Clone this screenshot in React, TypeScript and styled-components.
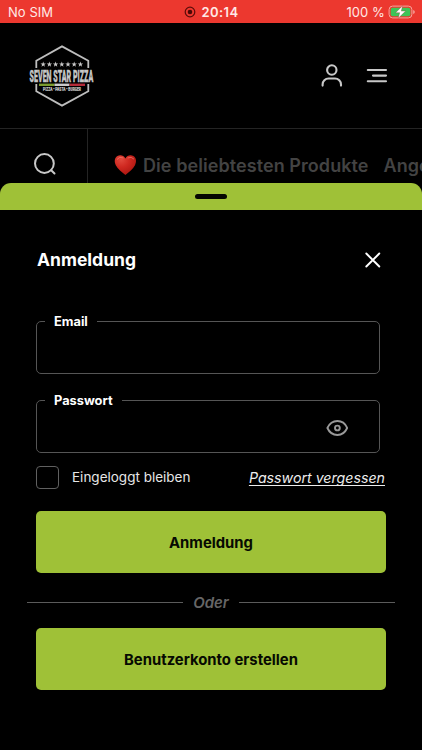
import React from "react";
import styled, { createGlobalStyle } from "styled-components";

const Global = createGlobalStyle`
  * { box-sizing: border-box; }
  body { margin: 0; background: #000; font-family: Inter, "Liberation Sans", sans-serif; }
  button, input { font-family: inherit; }
`;

const Screen = styled.div`
  width: 422px;
  height: 750px;
  overflow: hidden;
  display: flex;
  flex-direction: column;
  background: #000;
`;

const StatusBar = styled.div`
  height: 23px;
  flex: none;
  display: grid;
  grid-template-columns: 1fr auto 1fr;
  align-items: center;
  padding: 1px 7px 0 8px;
  background: #ec382f;
  color: #ffe9e6;
  font-size: 13px;
  line-height: 22px;
`;

const Carrier = styled.span`
  letter-spacing: 0.05px;
`;

const Clock = styled.div`
  display: flex;
  align-items: center;
  gap: 5px;
  font-weight: 600;
  letter-spacing: 0.45px;
`;

const Battery = styled.div`
  display: flex;
  align-items: center;
  justify-content: flex-end;
  gap: 3px;
  letter-spacing: 0.1px;
`;

const Header = styled.header`
  height: 106px;
  flex: none;
  display: flex;
  align-items: flex-start;
  justify-content: space-between;
  padding: 20px 34px 0 26px;
  border-bottom: 1px solid #242424;
`;

const HeaderActions = styled.div`
  display: flex;
  align-items: center;
  gap: 23px;
  margin-top: 20px;
`;

const IconButton = styled.button`
  display: flex;
  padding: 0;
  border: 0;
  background: none;
`;

const CategoryBar = styled.nav`
  height: 54px;
  flex: none;
  display: flex;
`;

const SearchCell = styled.div`
  width: 88px;
  flex: none;
  padding: 23px 0 0 33px;
  border-right: 1px solid #242424;
`;

const Categories = styled.div`
  display: flex;
  align-items: flex-start;
  padding: 25px 0 0 26px;
  color: #434343;
  font-size: 18px;
  font-weight: 600;
  line-height: 24px;
  letter-spacing: 0.07px;
  white-space: nowrap;
`;

const Category = styled.span<{ $start: number }>`
  margin-left: ${(p) => p.$start}px;
`;

const Sheet = styled.main`
  flex: 1;
  display: flex;
  flex-direction: column;
`;

const SheetGrip = styled.div`
  height: 27px;
  flex: none;
  display: flex;
  justify-content: center;
  padding-top: 11px;
  border-radius: 11px 11px 0 0;
  background: #9fc137;

  &::after {
    content: "";
    width: 32px;
    height: 5px;
    border-radius: 3px;
    background: #050702;
  }
`;

const SheetBody = styled.form`
  display: flex;
  flex-direction: column;
  padding: 38px 36px 0;
`;

const TitleRow = styled.div`
  display: flex;
  align-items: center;
  justify-content: space-between;
  height: 24px;
  padding: 0 5px 0 1px;
`;

const Title = styled.h1`
  margin: 0;
  color: #fff;
  font-size: 17.5px;
  font-weight: 650;
  line-height: 22px;
`;

const Fields = styled.div`
  display: flex;
  flex-direction: column;
  gap: 17px;
  margin: 40px 6px 0 0;
`;

const Field = styled.fieldset`
  height: 62px;
  min-width: 0;
  margin: 0;
  padding: 0 31px 0 8px;
  display: flex;
  align-items: center;
  border: 1px solid #555;
  border-radius: 5px;
`;

const Legend = styled.legend`
  padding: 1px 9px 0;
  color: #fff;
  font-size: 12.8px;
  font-weight: 650;
  line-height: 17px;
`;

const Input = styled.input`
  flex: 1;
  min-width: 0;
  height: 36px;
  border: 0;
  outline: 0;
  background: transparent;
  color: #fff;
`;

const RevealButton = styled(IconButton)`
  margin-top: 2px;
`;

const Options = styled.div`
  display: flex;
  align-items: center;
  justify-content: space-between;
  height: 24px;
  margin: 12px 0 22px;
`;

const Remember = styled.label`
  display: flex;
  align-items: center;
  gap: 13px;
  color: #e6e6e6;
  font-size: 13.5px;
  line-height: 20px;
`;

const Checkbox = styled.input`
  appearance: none;
  width: 23px;
  height: 23px;
  margin: 0;
  border: 1px solid #606060;
  border-radius: 4px;
`;

const Forgot = styled.a`
  margin: 2px 1px 0 0;
  color: #ededed;
  font-size: 14.2px;
  font-style: italic;
  line-height: 20px;
  text-decoration: underline;
  text-underline-offset: 2px;
  text-decoration-skip-ink: none;
`;

const PrimaryButton = styled.button`
  width: 350px;
  height: 62px;
  padding: 2px 0 0;
  border: 0;
  border-radius: 5px;
  background: #9fc137;
  color: #070a02;
  font-size: 14.85px;
  font-weight: 650;
`;

const Divider = styled.div`
  display: flex;
  align-items: center;
  gap: 10px;
  height: 20px;
  margin: 19px -9px 16px;
  color: #666;
  font-size: 15px;
  font-style: italic;
  font-weight: 600;

  &::before,
  &::after {
    content: "";
    flex: 1;
    height: 1px;
    background: #5b5b5b;
  }
`;

const STAR = "M0-2.8 .7-.85 2.7-.85 1.1.35 1.7 2.3 0 1.2-1.7 2.3-1.1.35-2.7-.85-.7-.85Z";

function Logo() {
  return (
    <svg width="72" height="66" viewBox="0 0 72 66">
      <path
        d="M10.3 25V17.8L36 3.4 62.3 17.8V25M10.3 41V48.2L36 62.6 62.3 48.2V41"
        fill="none" stroke="#bdbdbd" strokeWidth="1.8"
      />
      <g fill="#c8c8c8">
        {[17.2, 23.4, 29.6, 35.8, 42, 48.2, 54.4].map((x) => (
          <path key={x} d={STAR} transform={`translate(${x} 21.4)`} />
        ))}
      </g>
      <text
        x="3.6" y="39.3" fill="#c6c6c6" stroke="#c6c6c6" strokeWidth=".4"
        fontFamily="Roboto, sans-serif" fontSize="16.6"
        fontWeight="900" textLength="63.6" lengthAdjust="spacingAndGlyphs"
      >SEVEN STAR PIZZA</text>
      <path d="M13 40.6H28.5V43H13Z" fill="#7b9c2e" />
      <path d="M28.5 40.6H43.5V43H28.5Z" fill="#cacaca" />
      <path d="M43.5 40.6H59V43H43.5Z" fill="#b52b39" />
      <text
        x="17" y="48.1" fill="#c4c4c4" stroke="#c4c4c4" strokeWidth=".15"
        fontFamily="Roboto, sans-serif" fontSize="4.7"
        fontWeight="900" textLength="38" lengthAdjust="spacingAndGlyphs"
      >PIZZA • PASTA • BURGER</text>
    </svg>
  );
}

const RecordIcon = () => (
  <svg width="12" height="12" viewBox="0 0 12 12">
    <circle cx="6" cy="6" r="4.8" fill="none" stroke="#5b0d09" strokeWidth="1.2" />
    <circle cx="6" cy="6" r="2.3" fill="#4b0806" />
  </svg>
);

const BatteryIcon = () => (
  <svg width="27" height="14" viewBox="0 0 27 14">
    <rect x="1.1" y="1.1" width="22.8" height="11.8" rx="3.5" fill="none" stroke="#f5a49c" />
    <rect x="2.7" y="2.7" width="19.6" height="8.6" rx="2" fill="#3ec457" />
    <path d="M25.2 5V9Q26.8 8.6 26.8 7T25.2 5Z" fill="#f5a49c" />
    <path d="M14.6 .7 7.6 7.7H11.7L10.2 13.3 17.6 6.1H13.3Z" fill="#fff" stroke="#8b423b" strokeWidth=".35" />
  </svg>
);

const UserIcon = () => (
  <svg width="22" height="25" viewBox="0 0 22 25" fill="none" stroke="#c8c8c8" strokeWidth="2.1" strokeLinecap="round">
    <circle cx="10.8" cy="7" r="4.7" />
    <path d="M1.6 22.6V21.5A6 6 0 0 1 7.6 15.5H14A6 6 0 0 1 20 21.5V22.6" />
  </svg>
);

const MenuIcon = () => (
  <svg width="22" height="25" viewBox="0 0 22 25" fill="none" stroke="#c8c8c8" strokeWidth="2.1" strokeLinecap="round">
    <path d="M1.8 7H20M7 12.6H20M1.8 18.3H20" />
  </svg>
);

const SearchIcon = () => (
  <svg width="24" height="24" viewBox="0 0 24 24" fill="none" stroke="#c8c8c8" strokeWidth="2" strokeLinecap="round">
    <circle cx="11.4" cy="11.5" r="9.4" />
    <path d="M18.2 18.2 21.5 21.5" />
  </svg>
);

const HeartIcon = () => (
  <svg width="23" height="22" viewBox="0 0 23 22">
    <defs>
      <radialGradient id="heart" cx=".3" cy=".22" r=".85">
        <stop offset="0" stopColor="#e0483c" />
        <stop offset=".45" stopColor="#cf2820" />
        <stop offset="1" stopColor="#a9150f" />
      </radialGradient>
    </defs>
    <path d="M11.4 4.6C9.7 1.2 6 .6 3.4 2.1.4 3.9.1 8 1.8 11.2 3.8 15 7.8 18.1 11.4 21.1 15 18.1 19 15 21 11.2 22.7 8 22.4 3.9 19.4 2.1 16.8.6 13.1 1.2 11.4 4.6Z" fill="url(#heart)" />
    <path d="M3.2 5.2Q5.5 1.9 9 3.8M14 3.8Q17.4 2.2 19.7 4.8" fill="none" stroke="#ee8378" strokeWidth="1" strokeLinecap="round" opacity=".65" />
  </svg>
);

const CloseIcon = () => (
  <svg width="16" height="16" viewBox="0 0 16 16" stroke="#fff" strokeWidth="1.9" strokeLinecap="round">
    <path d="M1.3 1.5 14.3 14.5M14.3 1.5 1.3 14.5" />
  </svg>
);

const EyeIcon = () => (
  <svg width="22" height="18" viewBox="0 0 22 18" fill="none" stroke="#999" strokeWidth="1.9" strokeLinejoin="round">
    <path d="M1.4 9C3.4 4.6 6.8 2 11.4 2S19.3 4.6 21.2 9C19.3 13.4 15.9 16 11.4 16S3.4 13.4 1.4 9Z" />
    <circle cx="11.4" cy="9" r="2.4" />
  </svg>
);

export default function App() {
  return (
    <Screen>
      <Global />
      <StatusBar>
        <Carrier>No SIM</Carrier>
        <Clock><RecordIcon />20:14</Clock>
        <Battery>100 %<BatteryIcon /></Battery>
      </StatusBar>
      <Header>
        <Logo />
        <HeaderActions>
          <IconButton aria-label="Konto"><UserIcon /></IconButton>
          <IconButton aria-label="Menü"><MenuIcon /></IconButton>
        </HeaderActions>
      </Header>
      <CategoryBar>
        <SearchCell><SearchIcon /></SearchCell>
        <Categories>
          <HeartIcon />
          <Category $start={6}>Die beliebtesten Produkte</Category>
          <Category $start={15}>Angebote</Category>
        </Categories>
      </CategoryBar>
      <Sheet>
        <SheetGrip />
        <SheetBody onSubmit={(e: React.FormEvent) => e.preventDefault()}>
          <TitleRow>
            <Title>Anmeldung</Title>
            <IconButton type="button" aria-label="Schließen"><CloseIcon /></IconButton>
          </TitleRow>
          <Fields>
            <Field>
              <Legend>Email</Legend>
              <Input type="email" aria-label="Email" />
            </Field>
            <Field>
              <Legend>Passwort</Legend>
              <Input type="password" aria-label="Passwort" />
              <RevealButton type="button" aria-label="Passwort anzeigen"><EyeIcon /></RevealButton>
            </Field>
          </Fields>
          <Options>
            <Remember><Checkbox type="checkbox" />Eingeloggt bleiben</Remember>
            <Forgot>Passwort vergessen</Forgot>
          </Options>
          <PrimaryButton type="submit">Anmeldung</PrimaryButton>
          <Divider>Oder</Divider>
          <PrimaryButton type="button">Benutzerkonto erstellen</PrimaryButton>
        </SheetBody>
      </Sheet>
    </Screen>
  );
}
